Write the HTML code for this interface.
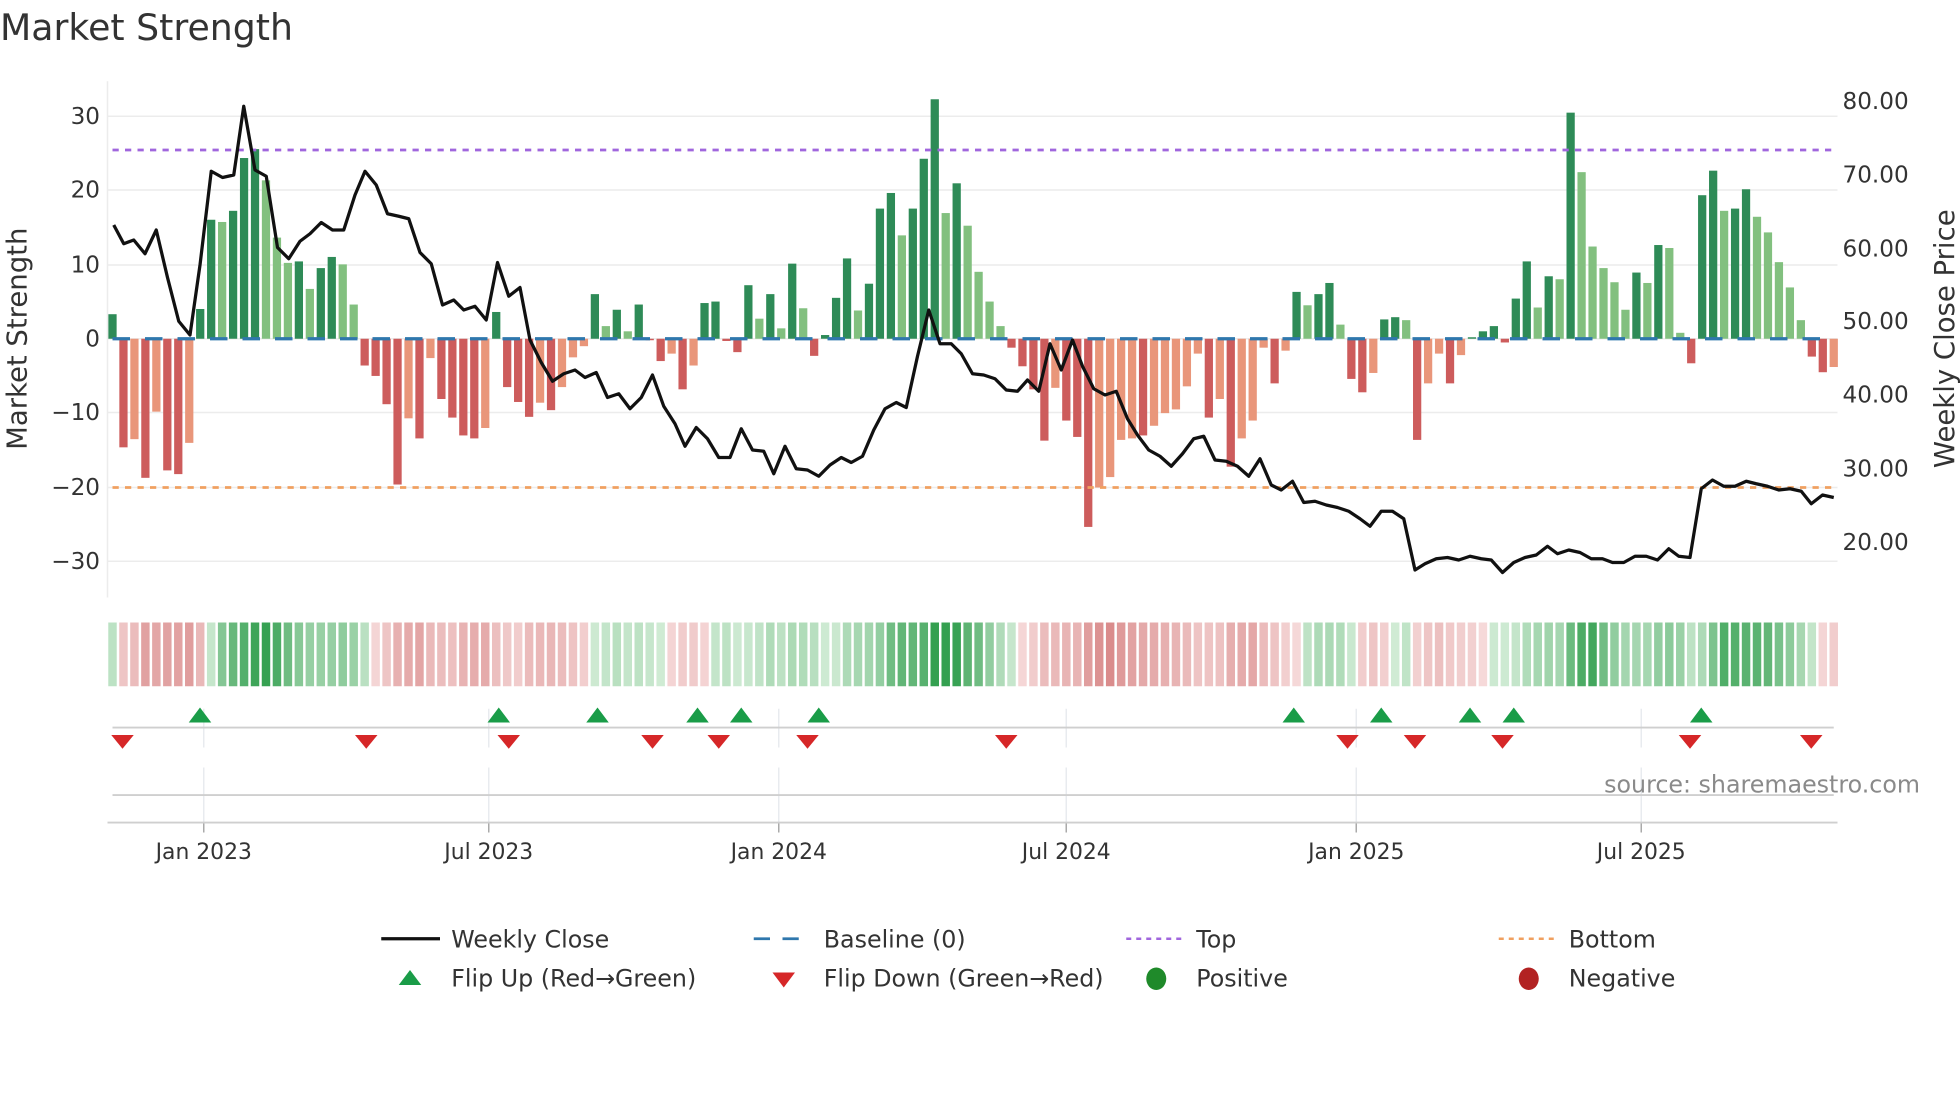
<!DOCTYPE html>
<html><head><meta charset="utf-8"><style>
html,body{margin:0;padding:0;background:#fff;width:1960px;height:1102px;overflow:hidden}
svg{display:block}
text{font-family:"DejaVu Sans","Liberation Sans",sans-serif;fill:#333}
</style></head><body>
<svg id="s" width="1960" height="1102" viewBox="0 0 1568 881.6" xmlns="http://www.w3.org/2000/svg">
<text x="0" y="32" font-size="29">Market Strength</text>
<g id="grid" stroke="#ececec" stroke-width="1.2"></g>
<line x1="86" y1="65" x2="86" y2="478" stroke="#ececec" stroke-width="1.2"/>
<g id="bars"></g>
<line x1="90" y1="271" x2="1467" y2="271" stroke="#2f77ad" stroke-width="2.6" stroke-dasharray="14 12"/>
<line x1="90" y1="120" x2="1470" y2="120" stroke="#a066dd" stroke-width="2.2" stroke-dasharray="5 5"/>
<line x1="90" y1="390" x2="1470" y2="390" stroke="#f0a060" stroke-width="2.2" stroke-dasharray="5 5"/>
<polyline id="price" fill="none" stroke="#111" stroke-width="2.6" stroke-linejoin="round"/>
<g font-size="18.5" text-anchor="end">
<text x="80" y="99">30</text><text x="80" y="158">20</text><text x="80" y="218">10</text><text x="80" y="277">0</text>
<text x="80" y="336">−10</text><text x="80" y="396">−20</text><text x="80" y="455">−30</text>
</g>
<g font-size="18.5">
<text x="1474" y="87">80.00</text><text x="1474" y="146">70.00</text><text x="1474" y="205">60.00</text><text x="1474" y="263">50.00</text>
<text x="1474" y="322">40.00</text><text x="1474" y="381">30.00</text><text x="1474" y="440">20.00</text>
</g>
<text font-size="22" transform="translate(21,271) rotate(-90)" text-anchor="middle">Market Strength</text>
<text font-size="22" transform="translate(1563,271) rotate(-90)" text-anchor="middle">Weekly Close Price</text>
<g id="heat"></g>
<g id="vg" stroke="#e8ebef" stroke-width="1.2"></g>
<line x1="90" y1="582" x2="1467" y2="582" stroke="#cfcfcf" stroke-width="1.5"/>
<line x1="90" y1="636" x2="1467" y2="636" stroke="#cfcfcf" stroke-width="1.5"/>
<line x1="86" y1="658" x2="1470" y2="658" stroke="#cfcfcf" stroke-width="1.5"/>
<g id="mk"></g>
<text x="1536" y="634" font-size="19" text-anchor="end" style="fill:#8a8a8a">source: sharemaestro.com</text>
<g font-size="17.5" text-anchor="middle">
<text x="163" y="687">Jan 2023</text><text x="391" y="687">Jul 2023</text><text x="623" y="687">Jan 2024</text>
<text x="853" y="687">Jul 2024</text><text x="1085" y="687">Jan 2025</text><text x="1313" y="687">Jul 2025</text>
</g>
<g font-size="19">
<line x1="305" y1="751" x2="352" y2="751" stroke="#111" stroke-width="2.6"/><text x="361" y="758">Weekly Close</text>
<line x1="603" y1="751" x2="645" y2="751" stroke="#2f77ad" stroke-width="2.2" stroke-dasharray="13 10"/><text x="659" y="758">Baseline (0)</text>
<line x1="901" y1="751" x2="945" y2="751" stroke="#a066dd" stroke-width="2" stroke-dasharray="4 4"/><text x="957" y="758">Top</text>
<line x1="1199" y1="751" x2="1243" y2="751" stroke="#f0a060" stroke-width="2" stroke-dasharray="4 4"/><text x="1255" y="758">Bottom</text>
<polygon points="319,788 337,788 328,776" fill="#1a9c48"/><text x="361" y="789">Flip Up (Red→Green)</text>
<polygon points="618,778 636,778 627,790" fill="#d62728"/><text x="659" y="789">Flip Down (Green→Red)</text>
<ellipse cx="925" cy="783" rx="8" ry="9" fill="#1f8a2a"/><text x="957" y="789">Positive</text>
<ellipse cx="1223" cy="783" rx="8" ry="9" fill="#b22222"/><text x="1255" y="789">Negative</text>
</g>
</svg>
<script>
var NS="http://www.w3.org/2000/svg";
function el(p,t,a){var e=document.createElementNS(NS,t);for(var k in a)e.setAttribute(k,a[k]);document.getElementById(p).appendChild(e);return e;}
var D="3.3D,-14.6D,-13.5L,-18.7D,-9.8L,-17.7D,-18.2D,-14L,4D,16D,15.7L,17.2D,24.3D,25.5D,21.3L,13.6L,10.2L,10.4D,6.7L,9.5D,11D,10L,4.6L,-3.6D,-5D,-8.8D,-19.6D,-10.7L,-13.4D,-2.6L,-8.1D,-10.6D,-13D,-13.4D,-12L,3.6D,-6.5D,-8.5D,-10.5D,-8.6L,-9.6D,-6.5L,-2.5L,-1L,6D,1.7L,3.9D,1L,4.6D,-0.2D,-3D,-2L,-6.8D,-3.6L,4.8D,5D,-0.3D,-1.8D,7.2D,2.7L,6D,1.4L,10.1D,4.1L,-2.3D,0.5D,5.5D,10.8D,3.8L,7.4D,17.5D,19.6D,13.9L,17.5D,24.2D,32.2D,16.9L,20.9D,15.2L,9L,5L,1.7L,-1.2D,-3.7D,-6.8D,-13.7D,-6.6L,-11D,-13.2D,-25.3D,-20L,-18.6L,-13.6L,-13.4L,-13D,-11.7L,-10L,-9.5L,-6.4L,-2L,-10.6D,-8.1L,-17.2D,-13.4L,-11L,-1.2L,-6D,-1.6L,6.3D,4.5L,6D,7.5D,1.9L,-5.4D,-7.2D,-4.6L,2.6D,2.9D,2.5L,-13.6D,-6L,-2L,-6D,-2.2L,0.2D,1D,1.7D,-0.5D,5.4D,10.4D,4.2L,8.4D,8L,30.4D,22.4L,12.4L,9.5L,7.6L,3.9L,8.9D,7.5L,12.6D,12.2L,0.8L,-3.3D,19.3D,22.6D,17.2L,17.5D,20.1D,16.4L,14.3L,10.3L,6.9L,2.5L,-2.4D,-4.5D,-3.8L".split(",");
var N=D.length,x0=90,x1=1467,st=(x1-x0)/(N-1);
var sm=[];
D.forEach(function(s,i){var v=parseFloat(s),dk=s.slice(-1)=="D",x=x0+i*st;
var c=v>=0?(dk?"#2e8b57":"#82c07f"):(dk?"#cd5c5c":"#e9967a");
var h=Math.abs(v)*5.95;el("bars","rect",{x:x-3.3,y:v>=0?271-h:271,width:6.6,height:Math.max(h,0.6),fill:c});
sm.push(v);});
function mix(a,b,t){return "rgb("+a.map(function(q,j){return Math.round(q+(b[j]-q)*t)}).join(",")+")";}
for(var i=0;i<N;i++){var a=0,n=0;for(var j=Math.max(0,i-2);j<=i;j++){a+=sm[j];n++;}var v=a/n,x=x0+i*st;
var t=Math.min(Math.abs(v)/24,1),c=v>=0?mix([210,236,214],[52,160,80],t):mix([246,218,218],[214,130,130],t);
el("heat","rect",{x:x-st/2+1,y:498,width:st-2,height:51,fill:c});}
[93,152,212,271,330,390,449].forEach(function(y){el("grid","line",{x1:86,x2:1470,y1:y,y2:y});});
[163,391,623,853,1085,1313].forEach(function(x){el("vg","line",{x1:x,x2:x,y1:567,y2:598});el("vg","line",{x1:x,x2:x,y1:614,y2:658});
el("vg","line",{x1:x,x2:x,y1:658,y2:666,stroke:"#aaa"});});
[160,399,478,558,593,655,1035,1105,1176,1211,1361].forEach(function(x){el("mk","polygon",{points:(x-9)+",578 "+(x+9)+",578 "+x+",566",fill:"#1a9c48"});});
[98,293,407,522,575,646,805,1078,1132,1202,1352,1449].forEach(function(x){el("mk","polygon",{points:(x-9)+",588 "+(x+9)+",588 "+x+",599",fill:"#d62728"});});
var P="91 180,99 195,107 192,116 203,125 184,134 222,143 257,152 268,160 212,169 137,178 142,187 140,195 85,204 136,213 141,222 198,231 207,240 193,248 187,257 178,266 184,275 184,284 156,292 137,301 148,310 171,319 173,327 175,336 202,345 211,354 244,363 240,371 248,380 245,389 256,398 210,407 237,416 230,424 272,433 290,442 305,451 299,460 296,468 302,477 298,486 318,495 315,504 327,513 318,522 300,531 325,540 339,548 357,557 342,566 351,575 366,584 366,593 343,602 360,611 361,619 379,628 357,637 375,646 376,655 381,664 372,673 366,681 370,690 365,699 344,708 327,717 322,725 326,734 285,743 248,752 275,761 275,769 283,778 299,787 300,796 303,805 312,814 313,822 304,831 313,840 275,849 296,858 272,866 293,875 311,884 316,893 313,902 335,910 348,919 360,928 365,937 373,946 363,955 351,963 349,972 368,981 369,990 373,999 381,1008 367,1017 388,1025 392,1034 385,1043 402,1052 401,1061 404,1070 406,1079 409,1088 415,1096 421,1105 409,1114 409,1123 415,1132 456,1140 451,1149 447,1158 446,1167 448,1176 445,1185 447,1193 448,1202 458,1211 450,1220 446,1229 444,1238 437,1246 443,1255 440,1264 442,1273 447,1282 447,1290 450,1299 450,1308 445,1317 445,1326 448,1335 439,1343 445,1352 446,1361 391,1370 384,1379 389,1388 389,1397 385,1405 387,1414 389,1423 392,1432 391,1441 393,1449 403,1458 396,1467 398";
document.getElementById("price").setAttribute("points",P);
</script>
</body></html>
